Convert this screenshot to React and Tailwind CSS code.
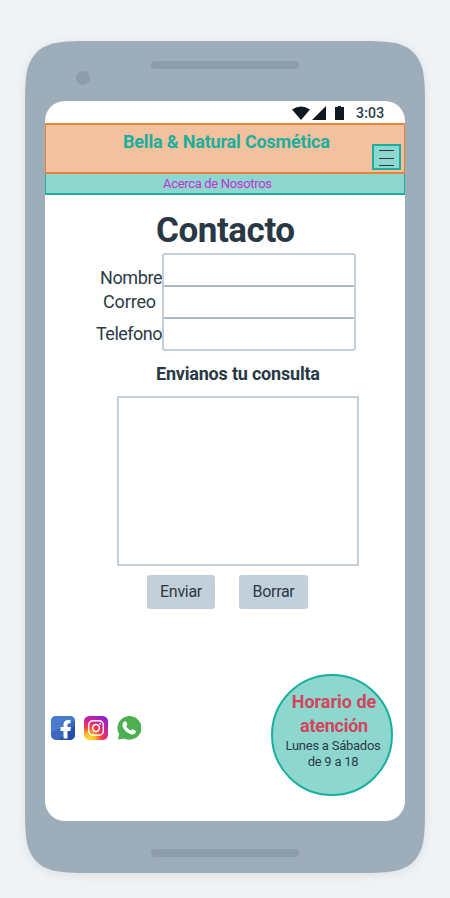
import React from "react";

function StatusBar() {
  return (
    <div className="flex h-[22px] shrink-0 items-start text-[#2c3a47]">
      <svg className="ml-[246px] mt-1 h-[16px] w-[54px]" viewBox="0 0 54 16" fill="#101820">
        <path d="M1 4.6Q10 -1.6 19 4.6L10 15Z" />
        <path d="M35 1V15H21Z" />
        <path d="M44 2h3V1h3v1h3v13h-9Z" />
      </svg>
      <span className="ml-[11px] mt-1 text-[14px] font-medium leading-4 tracking-[0.2px] whitespace-nowrap">3:03</span>
    </div>
  );
}

function Header() {
  return (
    <header className="shrink-0">
      <div className="flex h-[51px] justify-between border-x border-y-2 border-[#e8833a] bg-[#f3c19d]">
        <h1 className="ml-[77px] mt-[7px] text-[18px] font-bold leading-5 tracking-[-0.18px] whitespace-nowrap text-[#1aae9f]">
          Bella &amp; Natural Cosmética
        </h1>
        <button aria-label="Menú" className="mr-[3px] mt-[19px] flex h-[26px] w-[29px] flex-col items-center gap-[6px] border-2 border-[#1aae9f] bg-[#8dd7cf] pt-1">
          <span className="h-px w-[15px] shrink-0 bg-[#2c3a47]" />
          <span className="mt-px h-px w-[15px] shrink-0 bg-[#2c3a47]" />
          <span className="h-px w-[15px] shrink-0 bg-[#2c3a47]" />
        </button>
      </div>
      <nav className="flex h-[21px] border-x border-b-2 border-[#1aae9f] bg-[#8dd7cf]">
        <a className="ml-[117px] mt-[2px] text-[13px] leading-4 tracking-[-0.32px] whitespace-nowrap text-[#bd34d1]">Acerca de Nosotros</a>
      </nav>
    </header>
  );
}

function ContactForm() {
  return (
    <form className="flex shrink-0 flex-col text-[#2c3a47]">
      <h2 className="ml-[111px] mt-[16px] h-[42px] text-[35px] font-bold leading-10 tracking-[-0.45px] whitespace-nowrap text-[#293845]">Contacto</h2>
      <div className="flex h-[98px]">
        <div className="flex w-[117px] flex-col text-[18px] leading-6 whitespace-nowrap">
          <label className="ml-[55px] mt-[13px] tracking-[-0.4px]">Nombre</label>
          <label className="ml-[58px] tracking-[-0.15px]">Correo</label>
          <label className="ml-[51px] mt-2 tracking-[-0.5px]">Telefono</label>
        </div>
        <div className="flex w-[194px] flex-col rounded-[3px] border-2 border-[#c3cfd9]">
          <input className="h-[32px] border-b-2 border-[#a9b9c6] outline-none" />
          <input className="h-[32px] border-b-2 border-[#a9b9c6] outline-none" />
          <input className="h-[30px] outline-none" />
        </div>
      </div>
      <label className="ml-[111px] mt-[11px] text-[18px] font-bold leading-6 tracking-[-0.2px] whitespace-nowrap text-[#293845]">Envianos tu consulta</label>
      <textarea className="ml-[72px] mt-[10px] h-[170px] w-[242px] resize-none border-2 border-[#c3cfd9] outline-none" />
      <div className="ml-[102px] mt-[9px] flex gap-6 text-[16px] leading-6 tracking-[-0.3px]">
        <button className="h-[34px] w-[68px] rounded-[3px] bg-[#c3cfd9]">Enviar</button>
        <button className="h-[34px] w-[69px] rounded-[3px] bg-[#c3cfd9]">Borrar</button>
      </div>
    </form>
  );
}

function SocialLinks() {
  return (
    <div className="ml-[6px] mt-[42px] flex h-6 gap-[9px]">
      <svg className="h-6 w-6" viewBox="0 0 24 24">
        <defs>
          <clipPath id="fb"><rect width="24" height="24" rx="5" /></clipPath>
        </defs>
        <g clipPath="url(#fb)">
          <rect width="24" height="24" fill="#3a68be" />
          <path d="M0 0H24V4L0 17Z" fill="#4a7acb" />
          <path d="M24 9V24H8Z" fill="#234fa6" />
        </g>
        <path d="M12.5 22.5V15H9.5V11h3V8.7C12.5 5.5 14.2 4 17.2 4h2.300V7.400h-1.700C16.700 7.400 16.500 8 16.500 9v2h3.500l-.6 4h-2.900v7.500Z" fill="#fff" />
      </svg>
      <svg className="h-6 w-6" viewBox="0 0 24 24">
        <defs>
          <radialGradient id="ig" cx="0.2" cy="1" r="1.15">
            <stop offset="0" stopColor="#ffe13d" />
            <stop offset="0.22" stopColor="#ffc229" />
            <stop offset="0.45" stopColor="#f5443d" />
            <stop offset="0.68" stopColor="#d7228f" />
            <stop offset="1" stopColor="#8b20d0" />
          </radialGradient>
        </defs>
        <rect width="24" height="24" rx="5.5" fill="url(#ig)" />
        <rect x="4.7" y="4.7" width="14.6" height="14.6" rx="4.2" fill="none" stroke="#fff" strokeWidth="1.4" />
        <circle cx="12" cy="12" r="3.4" fill="none" stroke="#fff" strokeWidth="1.5" />
        <circle cx="16.2" cy="7.8" r="1" fill="#fff" />
      </svg>
      <svg className="h-6 w-6" viewBox="0 0 24 24">
        <path d="M0.8 23.5 2.2 18A12 11.8 0 1 1 7 22.4Z" fill="#4caf50" />
        <path d="M7.4 5.4c.7-.4 1.5-.3 1.8.4l1.1 2.5c.2.7-.5 1.4-1 2 1 2 2.5 3.4 4.6 4.3.7-.6 1.2-1.7 2-1.4l2.5 1.2c.9.5.3 2.2-.4 3-1.2 1.3-3 1.3-4.9.5C9.3 16.3 7 14 5.7 11 4.9 8.7 5.7 6.5 7.4 5.4Z" fill="#fff" />
      </svg>
    </div>
  );
}

function Hours() {
  return (
    <aside className="mr-3 flex h-[122px] w-[122px] flex-col items-center rounded-full border-2 border-[#1aae9f] bg-[#8dd7cf] pt-[14px] whitespace-nowrap">
      <strong className="ml-1 text-[18px] font-bold leading-6 text-[#d3455b]">Horario de</strong>
      <strong className="ml-1 text-[18px] font-bold leading-6 tracking-[-0.25px] text-[#d3455b]">atención</strong>
      <span className="ml-[2px] text-[13px] leading-4 tracking-[-0.25px] text-[#2c3a47]">Lunes a Sábados</span>
      <span className="ml-[2px] text-[13px] leading-4 tracking-[-0.25px] text-[#2c3a47]">de 9 a 18</span>
    </aside>
  );
}

// Phone body with continuous-curvature corners.
function PhoneBody() {
  return (
    <svg className="absolute inset-0 h-[832px] w-[400px] overflow-visible drop-shadow-[0_2px_5px_rgba(0,0,0,0.08)]" viewBox="0 0 400 832">
      <path
        d="M0 60C0 44 1 33 3 26C7 14 14 7 26 3C33 1 44 0 60 0H340C356 0 367 1 374 3C386 7 393 14 397 26C399 33 400 44 400 60V772C400 788 399 799 397 806C393 818 386 825 374 829C367 831 356 832 340 832H60C44 832 33 831 26 829C14 825 7 818 3 806C1 799 0 788 0 772Z"
        fill="#9eadba"
      />
    </svg>
  );
}

export default function App() {
  return (
    <main className="h-[898px] w-[450px] overflow-hidden bg-[#eff3f6] px-[25px] pt-[41px] font-['Roboto',sans-serif]">
      <div className="relative h-[832px] w-[400px]">
        <PhoneBody />
        <div className="relative flex h-full flex-col px-5">
          <div className="flex h-[60px] shrink-0 items-start">
            <span className="ml-[31px] mt-[30px] h-[14px] w-[14px] rounded-full bg-[#8e9dab]" />
            <span className="ml-[61px] mt-5 h-2 w-[148px] rounded-full bg-[#8e9dab]" />
          </div>
          <div className="flex h-[720px] shrink-0 flex-col overflow-hidden rounded-[20px] bg-white">
            <StatusBar />
            <Header />
            <ContactForm />
            <div className="mt-[65px] flex justify-between">
              <SocialLinks />
              <Hours />
            </div>
          </div>
          <span className="mt-7 h-2 w-[148px] self-center rounded-full bg-[#8e9dab]" />
        </div>
      </div>
    </main>
  );
}
